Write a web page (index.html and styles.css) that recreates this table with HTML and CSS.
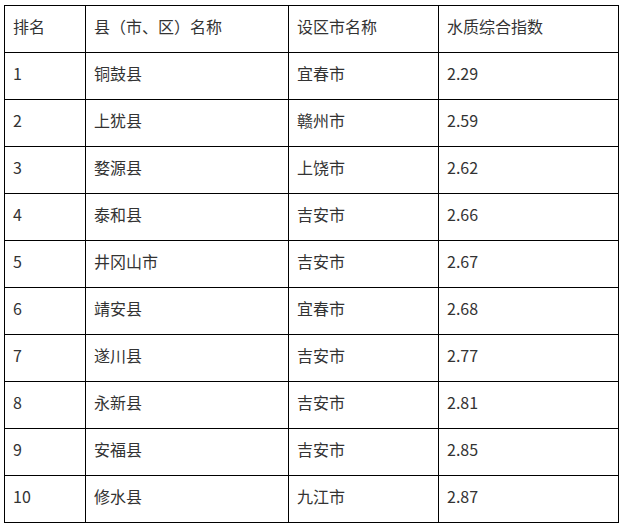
FILE: index.html
```html
<!DOCTYPE html>
<html lang="zh">
<head>
<meta charset="utf-8">
<link rel="stylesheet" href="styles.css">
</head>
<body>
<table class="rank">
  <colgroup>
    <col class="c1"><col class="c2"><col class="c3"><col class="c4">
  </colgroup>
  <tr><td>排名</td><td>县（市、区）名称</td><td>设区市名称</td><td>水质综合指数</td></tr>
  <tr><td>1</td><td>铜鼓县</td><td>宜春市</td><td>2.29</td></tr>
  <tr><td>2</td><td>上犹县</td><td>赣州市</td><td>2.59</td></tr>
  <tr><td>3</td><td>婺源县</td><td>上饶市</td><td>2.62</td></tr>
  <tr><td>4</td><td>泰和县</td><td>吉安市</td><td>2.66</td></tr>
  <tr><td>5</td><td>井冈山市</td><td>吉安市</td><td>2.67</td></tr>
  <tr><td>6</td><td>靖安县</td><td>宜春市</td><td>2.68</td></tr>
  <tr><td>7</td><td>遂川县</td><td>吉安市</td><td>2.77</td></tr>
  <tr><td>8</td><td>永新县</td><td>吉安市</td><td>2.81</td></tr>
  <tr><td>9</td><td>安福县</td><td>吉安市</td><td>2.85</td></tr>
  <tr><td>10</td><td>修水县</td><td>九江市</td><td>2.87</td></tr>
</table>
</body>
</html>
```

FILE: styles.css
```css
html, body {
  margin: 0;
  padding: 0;
  background: #fff;
}
body {
  padding: 5px 0 0 4px;
  font-family: "Microsoft YaHei", "Noto Sans CJK SC", sans-serif;
  font-size: 16px;
  color: #333;
}
.rank {
  border-collapse: collapse;
  table-layout: fixed;
  width: 614px;
}
.c1 { width: 81px; }
.c2 { width: 203px; }
.c3 { width: 150px; }
.c4 { width: 180px; }
.rank td {
  border: 1px solid #000;
  height: 46px;
  box-sizing: border-box;
  padding: 8px 8px 14px 8px;
  line-height: 24px;
  vertical-align: top;
  text-align: left;
  white-space: nowrap;
}
```
